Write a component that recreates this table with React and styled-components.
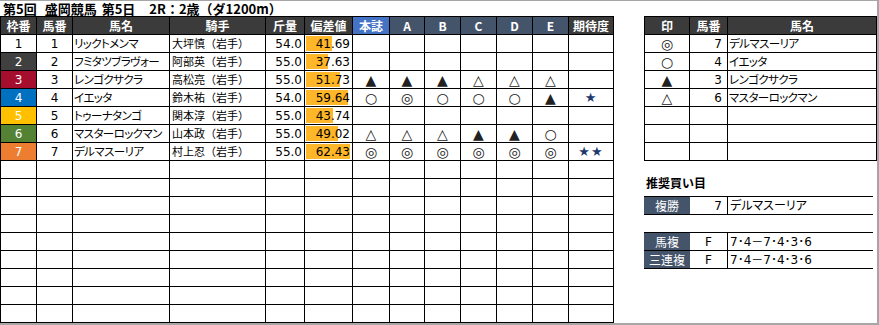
import React from 'react';
import styled, { createGlobalStyle } from 'styled-components';

const GlobalStyle = createGlobalStyle`
  html, body {
    margin: 0;
    padding: 0;
    background: #fff;
  }
  body {
    font-family: "DejaVu Sans", "Noto Sans CJK JP", sans-serif;
    color: #000;
  }
`;

const LEFT_COLS = '36px 36px 97px 96px 39px 48px 37px 35px 36px 36px 36px 36px 45px';
const RIGHT_COLS = '45px 38px 149px';

const Sheet = styled.div`
  width: 879px;
  height: 325px;
  box-sizing: border-box;
  border-top: 1px solid #a6a6a6;
  border-right: 2px solid #a6a6a6;
  border-bottom: 2px solid #a6a6a6;
  overflow: hidden;
  display: flex;
  flex-direction: column;
`;

const TitleBar = styled.div`
  height: 16px;
  display: flex;
  align-items: center;
  padding-left: 3px;
  font-family: "Noto Sans CJK JP", sans-serif;
  font-size: 13px;
  line-height: 15px;
  font-weight: 700;
  white-space: nowrap;
`;

const TitlePart = styled.span`
  margin-left: ${(p) => p.$gap || 0}px;
`;

const Body = styled.div`
  display: flex;
  align-items: flex-start;
`;

const Grid = styled.div`
  display: flex;
  flex-direction: column;
  border-left: 1px solid #000;
  border-top: 1px solid #000;
  width: ${(p) => p.$width}px;
  box-sizing: border-box;
`;

const Row = styled.div`
  display: grid;
  grid-template-columns: ${(p) => p.$cols};
  height: 18px;
`;

const Cell = styled.div`
  box-sizing: border-box;
  border-right: 1px solid #000;
  border-bottom: 1px solid #000;
  display: flex;
  align-items: center;
  justify-content: ${(p) => p.$align || 'center'};
  padding: ${(p) => p.$pad || '0 2px'};
  background: ${(p) => p.$bg || '#fff'};
  color: ${(p) => p.$color || '#000'};
  font-size: 12px;
  line-height: 1;
  white-space: nowrap;
`;

const HEAD_TONES = {
  dark: '#3b3b3b',
  blue: '#4472c4',
  slate: '#44546a',
};

const HeadCell = styled(Cell)`
  background: ${(p) => HEAD_TONES[p.$tone || 'dark']};
  color: #fff;
  font-family: "Noto Sans CJK JP", sans-serif;
  font-weight: 700;
  font-size: 12px;
`;

const KanaCell = styled(Cell)`
  font-family: "Noto Sans CJK JP", sans-serif;
  font-feature-settings: "palt";
  font-size: 11.5px;
  letter-spacing: -0.6px;
`;

const JockeyCell = styled(Cell)`
  font-family: "Noto Sans CJK JP", sans-serif;
  font-size: 11px;
`;

const ScoreCell = styled(Cell)`
  background: linear-gradient(#ffb628, #ffb628) no-repeat 1px 1px / ${(p) => p.$bar}px 15px, #fff;
`;

const Mark = styled(Cell)`
  font-size: ${(p) => (p.$star ? '13px' : '14px')};
  color: ${(p) => (p.$star ? '#1f3a6e' : '#222')};
  letter-spacing: ${(p) => (p.$star ? '1px' : '0')};
`;

const RightColumn = styled.div`
  margin-left: 30px;
  display: flex;
  flex-direction: column;
`;

const SectionTitle = styled.div`
  height: 35px;
  display: flex;
  align-items: flex-end;
  padding: 0 0 5px 2px;
  box-sizing: border-box;
  font-family: "Noto Sans CJK JP", sans-serif;
  font-size: 12px;
  font-weight: 700;
`;

const BuyTable = styled.div`
  border-top: 1px solid #000;
  width: 229px;
  margin-top: ${(p) => p.$gap || 0}px;
`;

const BuyRow = styled.div`
  display: grid;
  grid-template-columns: 46px 38px 1fr;
  height: 18px;
  box-sizing: border-box;
  border-bottom: 1px solid #000;
`;

const BuyLabel = styled.div`
  background: #44546a;
  color: #fff;
  display: flex;
  align-items: center;
  justify-content: center;
  font-family: "Noto Sans CJK JP", sans-serif;
  font-size: 12px;
  line-height: 1;
`;

const BuyValue = styled.div`
  border-right: 1px solid #000;
  display: flex;
  align-items: center;
  justify-content: ${(p) => p.$align || 'center'};
  padding-right: ${(p) => (p.$align === 'flex-end' ? '5px' : '0')};
  font-size: 12px;
  line-height: 1;
`;

const BuyText = styled.div`
  display: flex;
  align-items: center;
  padding-left: 2px;
  font-family: "DejaVu Sans", "Noto Sans CJK JP", sans-serif;
  font-feature-settings: "palt";
  font-size: 12px;
  line-height: 1;
`;

const FRAME = {
  1: { bg: '#fff', color: '#000' },
  2: { bg: '#404040', color: '#fff' },
  3: { bg: '#a50f2d', color: '#fff' },
  4: { bg: '#0070c0', color: '#fff' },
  5: { bg: '#ffc000', color: '#fff' },
  6: { bg: '#548235', color: '#fff' },
  7: { bg: '#ed7d31', color: '#fff' },
};

const horses = [
  { no: 1, name: 'リックトメンマ', jockey: '大坪慎（岩手）', kg: '54.0', score: 41.69, marks: [], star: '' },
  { no: 2, name: 'フミタツブラヴォー', jockey: '阿部英（岩手）', kg: '55.0', score: 37.63, marks: [], star: '' },
  { no: 3, name: 'レンゴクサクラ', jockey: '高松亮（岩手）', kg: '55.0', score: 51.73, marks: ['▲', '▲', '▲', '△', '△', '△'], star: '' },
  { no: 4, name: 'イエッタ', jockey: '鈴木祐（岩手）', kg: '54.0', score: 59.64, marks: ['○', '◎', '○', '○', '○', '▲'], star: '★' },
  { no: 5, name: 'トゥーナタンゴ', jockey: '関本淳（岩手）', kg: '55.0', score: 43.74, marks: [], star: '' },
  { no: 6, name: 'マスターロックマン', jockey: '山本政（岩手）', kg: '55.0', score: 49.02, marks: ['△', '△', '△', '▲', '▲', '○'], star: '' },
  { no: 7, name: 'デルマスーリア', jockey: '村上忍（岩手）', kg: '55.0', score: 62.43, marks: ['◎', '◎', '◎', '◎', '◎', '◎'], star: '★★' },
];

const picks = [
  { mark: '◎', no: 7, name: 'デルマスーリア' },
  { mark: '○', no: 4, name: 'イエッタ' },
  { mark: '▲', no: 3, name: 'レンゴクサクラ' },
  { mark: '△', no: 6, name: 'マスターロックマン' },
];

const barWidth = (v) => Math.round((44 * (v - 13)) / (62.43 - 13));

const markHeads = ['本誌', 'A', 'B', 'C', 'D', 'E'];

export default function App() {
  return (
    <>
      <GlobalStyle />
      <Sheet>
        <TitleBar>
          <TitlePart>第5回</TitlePart>
          <TitlePart $gap={8}>盛岡競馬</TitlePart>
          <TitlePart $gap={5}>第5日</TitlePart>
          <TitlePart $gap={14}>2R：2歳（ダ1200m）</TitlePart>
        </TitleBar>
        <Body>
          <Grid $width={614}>
            <Row $cols={LEFT_COLS}>
              <HeadCell>枠番</HeadCell>
              <HeadCell>馬番</HeadCell>
              <HeadCell>馬名</HeadCell>
              <HeadCell>騎手</HeadCell>
              <HeadCell>斤量</HeadCell>
              <HeadCell>偏差値</HeadCell>
              {markHeads.map((h, i) => (
                <HeadCell key={h} $tone={i === 0 ? 'blue' : 'slate'}>{h}</HeadCell>
              ))}
              <HeadCell>期待度</HeadCell>
            </Row>
            {horses.map((h) => (
              <Row key={h.no} $cols={LEFT_COLS}>
                <Cell $bg={FRAME[h.no].bg} $color={FRAME[h.no].color}>{h.no}</Cell>
                <Cell>{h.no}</Cell>
                <KanaCell $align="flex-start" $pad="0 1px">{h.name}</KanaCell>
                <JockeyCell $align="flex-start">{h.jockey}</JockeyCell>
                <Cell $align="flex-end">{h.kg}</Cell>
                <ScoreCell $align="flex-end" $bar={barWidth(h.score)}>{h.score.toFixed(2)}</ScoreCell>
                {Array.from({ length: 6 }, (_, i) => (
                  <Mark key={i}>{h.marks[i] || ''}</Mark>
                ))}
                <Mark $star>{h.star}</Mark>
              </Row>
            ))}
            {Array.from({ length: 9 }, (_, r) => (
              <Row key={`e${r}`} $cols={LEFT_COLS}>
                {Array.from({ length: 13 }, (_, c) => (
                  <Cell key={c} />
                ))}
              </Row>
            ))}
          </Grid>

          <RightColumn>
            <Grid $width={233}>
              <Row $cols={RIGHT_COLS}>
                <HeadCell>印</HeadCell>
                <HeadCell>馬番</HeadCell>
                <HeadCell>馬名</HeadCell>
              </Row>
              {picks.map((p) => (
                <Row key={p.no} $cols={RIGHT_COLS}>
                  <Mark>{p.mark}</Mark>
                  <Cell $align="flex-end" $pad="0 5px 0 0">{p.no}</Cell>
                  <KanaCell $align="flex-start" $pad="0 1px">{p.name}</KanaCell>
                </Row>
              ))}
              {Array.from({ length: 3 }, (_, r) => (
                <Row key={`r${r}`} $cols={RIGHT_COLS}>
                  <Cell />
                  <Cell />
                  <Cell />
                </Row>
              ))}
            </Grid>

            <SectionTitle>推奨買い目</SectionTitle>
            <BuyTable>
              <BuyRow>
                <BuyLabel>複勝</BuyLabel>
                <BuyValue $align="flex-end">7</BuyValue>
                <BuyText>デルマスーリア</BuyText>
              </BuyRow>
            </BuyTable>
            <BuyTable $gap={17}>
              <BuyRow>
                <BuyLabel>馬複</BuyLabel>
                <BuyValue>F</BuyValue>
                <BuyText>7･4－7･4･3･6</BuyText>
              </BuyRow>
              <BuyRow>
                <BuyLabel>三連複</BuyLabel>
                <BuyValue>F</BuyValue>
                <BuyText>7･4－7･4･3･6</BuyText>
              </BuyRow>
            </BuyTable>
          </RightColumn>
        </Body>
      </Sheet>
    </>
  );
}
